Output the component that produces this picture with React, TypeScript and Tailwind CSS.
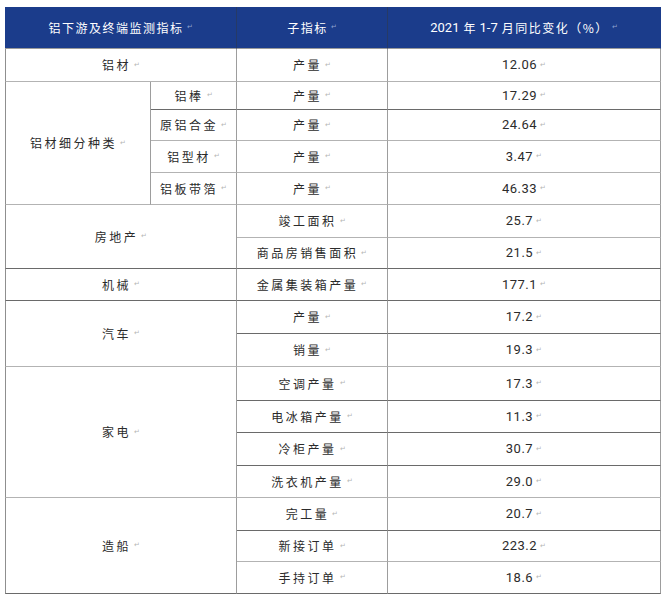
import React from "react";

const cjk = "font-['Noto_Sans_CJK_SC','Noto_Sans',sans-serif]";
const num = "font-['Roboto','Liberation_Sans',sans-serif]";

type Cell = {
  text: string;
  cls?: string;
  dark?: boolean;
  isNum?: boolean;
};

const Mark: React.FC<{ head?: boolean }> = ({ head }) => (
  <span className={`ml-[3px] text-[7px] ${head ? "text-[#8ea2d0]" : "text-[#b5b5b5]"}`}>↵</span>
);

const BodyCell: React.FC<Cell> = ({ text, cls = "", dark, isNum }) => (
  <div
    className={`flex items-center justify-center border-r border-b border-r-[#9d9d9d] ${
      dark ? "border-b-[#6a6a6a]" : "border-b-[#b3b3b3]"
    } ${cls}`}
  >
    <span
      className={
        isNum
          ? `${num} text-[13px] tracking-[0.5px] text-[#2b2b2b]`
          : `${cjk} text-[12px] tracking-[2.5px] text-[#2b2b2b]`
      }
    >
      {text}
    </span>
    <Mark />
  </div>
);

const rows: Cell[] = [
  { text: "铝材", cls: "col-span-2 border-l border-l-[#8f8f8f]" },
  { text: "产量" },
  { text: "12.06", isNum: true },

  { text: "铝材细分种类", cls: "row-span-4 border-l border-l-[#8f8f8f]" },
  { text: "铝棒", dark: true },
  { text: "产量", dark: true },
  { text: "17.29", isNum: true, dark: true },
  { text: "原铝合金" },
  { text: "产量" },
  { text: "24.64", isNum: true },
  { text: "铝型材" },
  { text: "产量" },
  { text: "3.47", isNum: true },
  { text: "铝板带箔" },
  { text: "产量" },
  { text: "46.33", isNum: true },

  { text: "房地产", cls: "col-span-2 row-span-2 border-l border-l-[#8f8f8f]", dark: true },
  { text: "竣工面积" },
  { text: "25.7", isNum: true },
  { text: "商品房销售面积", dark: true },
  { text: "21.5", isNum: true, dark: true },

  { text: "机械", cls: "col-span-2 border-l border-l-[#8f8f8f]", dark: true },
  { text: "金属集装箱产量", dark: true },
  { text: "177.1", isNum: true, dark: true },

  { text: "汽车", cls: "col-span-2 row-span-2 border-l border-l-[#8f8f8f]" },
  { text: "产量", dark: true },
  { text: "17.2", isNum: true, dark: true },
  { text: "销量" },
  { text: "19.3", isNum: true },

  { text: "家电", cls: "col-span-2 row-span-4 border-l border-l-[#8f8f8f]" },
  { text: "空调产量", dark: true },
  { text: "17.3", isNum: true, dark: true },
  { text: "电冰箱产量", dark: true },
  { text: "11.3", isNum: true, dark: true },
  { text: "冷柜产量", dark: true },
  { text: "30.7", isNum: true, dark: true },
  { text: "洗衣机产量" },
  { text: "29.0", isNum: true },

  { text: "造船", cls: "col-span-2 row-span-3 border-l border-l-[#8f8f8f]", dark: true },
  { text: "完工量", dark: true },
  { text: "20.7", isNum: true, dark: true },
  { text: "新接订单" },
  { text: "223.2", isNum: true },
  { text: "手持订单", dark: true },
  { text: "18.6", isNum: true, dark: true },
];

const HeadCell: React.FC<{ children: React.ReactNode; cls?: string }> = ({ children, cls = "" }) => (
  <div
    className={`flex items-center justify-center bg-[#1b3c8b] border-b border-b-[#9a9a9a] text-white ${cls}`}
  >
    {children}
    <Mark head />
  </div>
);

export default function App() {
  return (
    <div className="w-[666px] h-[601px] bg-white pt-[7px] pl-[5px]">
      <div className="grid w-[656px] grid-cols-[146px_86px_151px_273px] grid-rows-[42px_33px_28px_31px_32px_32px_33px_31px_32px_33px_33px_34px_32px_33px_32px_33px_31px_32px]">
        <HeadCell cls="col-span-2 border-r border-r-[#263a66]">
          <span className={`${cjk} text-[12px] tracking-[1.5px]`}>铝下游及终端监测指标</span>
        </HeadCell>
        <HeadCell cls="border-r border-r-[#263a66]">
          <span className={`${cjk} text-[12px] tracking-[1.5px]`}>子指标</span>
        </HeadCell>
        <HeadCell cls="border-r border-r-[#1b3c8b]">
          <span className={`${num} text-[13px]`}>2021</span>
          <span className={`${cjk} text-[12px] mx-[4px]`}>年</span>
          <span className={`${num} text-[13px]`}>1-7</span>
          <span className={`${cjk} text-[12px] tracking-[1.5px] ml-[4px]`}>月同比变化（%）</span>
        </HeadCell>
        {rows.map((c, i) => (
          <BodyCell key={i} {...c} />
        ))}
      </div>
    </div>
  );
}
